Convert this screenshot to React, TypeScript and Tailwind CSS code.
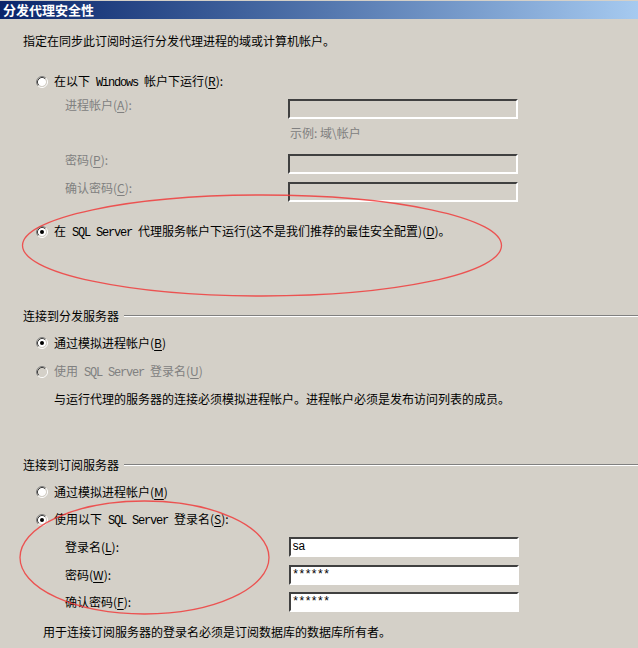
import React from "react";

const FONT = { fontFamily: '"Noto Sans CJK SC", "Noto Sans", sans-serif' };

// underlined accelerator letter in brackets, e.g. (R)
const Acc = ({ k }: { k: string }) => (
  <span>
    (<span className="underline underline-offset-2">{k}</span>)
  </span>
);

const Mono = ({ children }: { children: React.ReactNode }) => (
  <span className="whitespace-pre font-['Liberation_Mono',monospace] text-[12px] tracking-[-1.2px]">{children}</span>
);

const Radio = ({ checked, disabled }: { checked?: boolean; disabled?: boolean }) => (
  <svg width="12" height="12" viewBox="0 0 12 12" className="shrink-0">
    <circle cx="6" cy="6" r="4" fill={disabled ? "#d4d0c8" : "#ffffff"} />
    <path d="M2.11 9.89 A5.5 5.5 0 0 1 9.89 2.11" fill="none" stroke="#808080" strokeWidth="1" />
    <path d="M2.82 9.18 A4.5 4.5 0 0 1 9.18 2.82" fill="none" stroke="#404040" strokeWidth="1" />
    <path d="M9.89 2.11 A5.5 5.5 0 0 1 2.11 9.89" fill="none" stroke="#ffffff" strokeWidth="1" />
    <path d="M9.18 2.82 A4.5 4.5 0 0 1 2.82 9.18" fill="none" stroke="#d4d0c8" strokeWidth="1" />
    {checked && <circle cx="6" cy="6" r="2" fill="#000000" />}
  </svg>
);

const RadioRow = ({
  checked,
  disabled,
  className,
  children,
}: {
  checked?: boolean;
  disabled?: boolean;
  className?: string;
  children: React.ReactNode;
}) => (
  <div className={`flex h-[20px] items-center gap-[6px] pl-[13px] ${disabled ? "text-[#808080]" : "text-black"} ${className ?? ""}`}>
    <Radio checked={checked} disabled={disabled} />
    <span>{children}</span>
  </div>
);

const Box = ({ value, disabled }: { value?: string; disabled?: boolean }) => (
  <div
    className={`flex h-[20px] w-[230px] items-center border-2 border-t-[#404040] border-l-[#404040] border-b-white border-r-white pl-[1px] ${
      disabled ? "bg-[#d4d0c8]" : "bg-white"
    }`}
  >
    <span className="font-['Liberation_Mono',monospace] text-[12px] tracking-[-1px] text-black">{value}</span>
  </div>
);

const Section = ({ title, className }: { title: string; className?: string }) => (
  <div className={`flex h-[20px] items-center gap-[5px] ${className ?? ""}`}>
    <span className="whitespace-nowrap">{title}</span>
    <div className="h-[2px] flex-1 border-t border-b border-t-[#808080] border-b-white" />
  </div>
);

export default function App() {
  return (
    <div className="relative h-[648px] w-[638px] overflow-hidden bg-[#d4d0c8] text-[12px] leading-[12px] text-black" style={FONT}>
      <div className="flex h-[19px] items-center border-t border-[#d4d0c8] bg-gradient-to-r from-[#0a246a] to-[#a6caf0] pl-[3px]">
        <span className="text-[13px] font-bold text-white">分发代理安全性</span>
      </div>

      <div className="flex flex-col pl-[23px]">
        <div className="mt-[12px] flex h-[20px] items-center">指定在同步此订阅时运行分发代理进程的域或计算机帐户。</div>

        <RadioRow className="mt-[21px]">
          在以下<Mono> Windows </Mono>帐户下运行<Acc k="R" />:
        </RadioRow>

        <div className="mt-[7px] flex items-start text-[#808080]">
          <span className="w-[265px] shrink-0 pl-[42px]">
            进程帐户<Acc k="A" />:
          </span>
          <Box disabled />
        </div>
        <div className="flex h-[28px] items-center pl-[267px] text-[#808080]">示例: 域\帐户</div>
        <div className="mt-[7px] flex items-start text-[#808080]">
          <span className="w-[265px] shrink-0 pl-[42px]">
            密码<Acc k="P" />:
          </span>
          <Box disabled />
        </div>
        <div className="mt-[8px] flex items-start text-[#808080]">
          <span className="w-[265px] shrink-0 pl-[42px]">
            确认密码<Acc k="C" />:
          </span>
          <Box disabled />
        </div>

        <RadioRow checked className="mt-[20px]">
          在<Mono> SQL Server </Mono>代理服务帐户下运行(这不是我们推荐的最佳安全配置)<Acc k="D" />。
        </RadioRow>

        <Section title="连接到分发服务器" className="mt-[64px]" />
        <RadioRow checked className="mt-[7px]">
          通过模拟进程帐户<Acc k="B" />
        </RadioRow>
        <RadioRow disabled className="mt-[9px]">
          使用<Mono> SQL Server </Mono>登录名<Acc k="U" />
        </RadioRow>
        <div className="mt-[7px] flex h-[20px] items-center pl-[31px]">
          与运行代理的服务器的连接必须模拟进程帐户。进程帐户必须是发布访问列表的成员。
        </div>

        <Section title="连接到订阅服务器" className="mt-[46px]" />
        <RadioRow className="mt-[7px]">
          通过模拟进程帐户<Acc k="M" />
        </RadioRow>
        <RadioRow checked className="mt-[8px]">
          使用以下<Mono> SQL Server </Mono>登录名<Acc k="S" />:
        </RadioRow>

        <div className="mt-[7px] flex items-center">
          <span className="w-[266px] shrink-0 pl-[42px]">
            登录名<Acc k="L" />:
          </span>
          <Box value="sa" />
        </div>
        <div className="mt-[8px] flex items-center">
          <span className="w-[266px] shrink-0 pl-[42px]">
            密码<Acc k="W" />:
          </span>
          <Box value="******" />
        </div>
        <div className="mt-[7px] flex items-center">
          <span className="w-[266px] shrink-0 pl-[42px]">
            确认密码<Acc k="F" />:
          </span>
          <Box value="******" />
        </div>
        <div className="mt-[10px] flex h-[20px] items-center pl-[20px]">
          用于连接订阅服务器的登录名必须是订阅数据库的数据库所有者。
        </div>
      </div>

      {/* red annotation ellipses drawn over the dialog */}
      <svg className="pointer-events-none absolute inset-0" width="638" height="648" viewBox="0 0 638 648">
        <ellipse cx="262" cy="245.5" rx="239.5" ry="50.5" fill="none" stroke="#f03c3c" strokeOpacity="0.85" strokeWidth="1.3" />
        <ellipse cx="144.5" cy="557.5" rx="124.5" ry="56.5" fill="none" stroke="#f03c3c" strokeOpacity="0.85" strokeWidth="1.3" />
      </svg>
    </div>
  );
}
